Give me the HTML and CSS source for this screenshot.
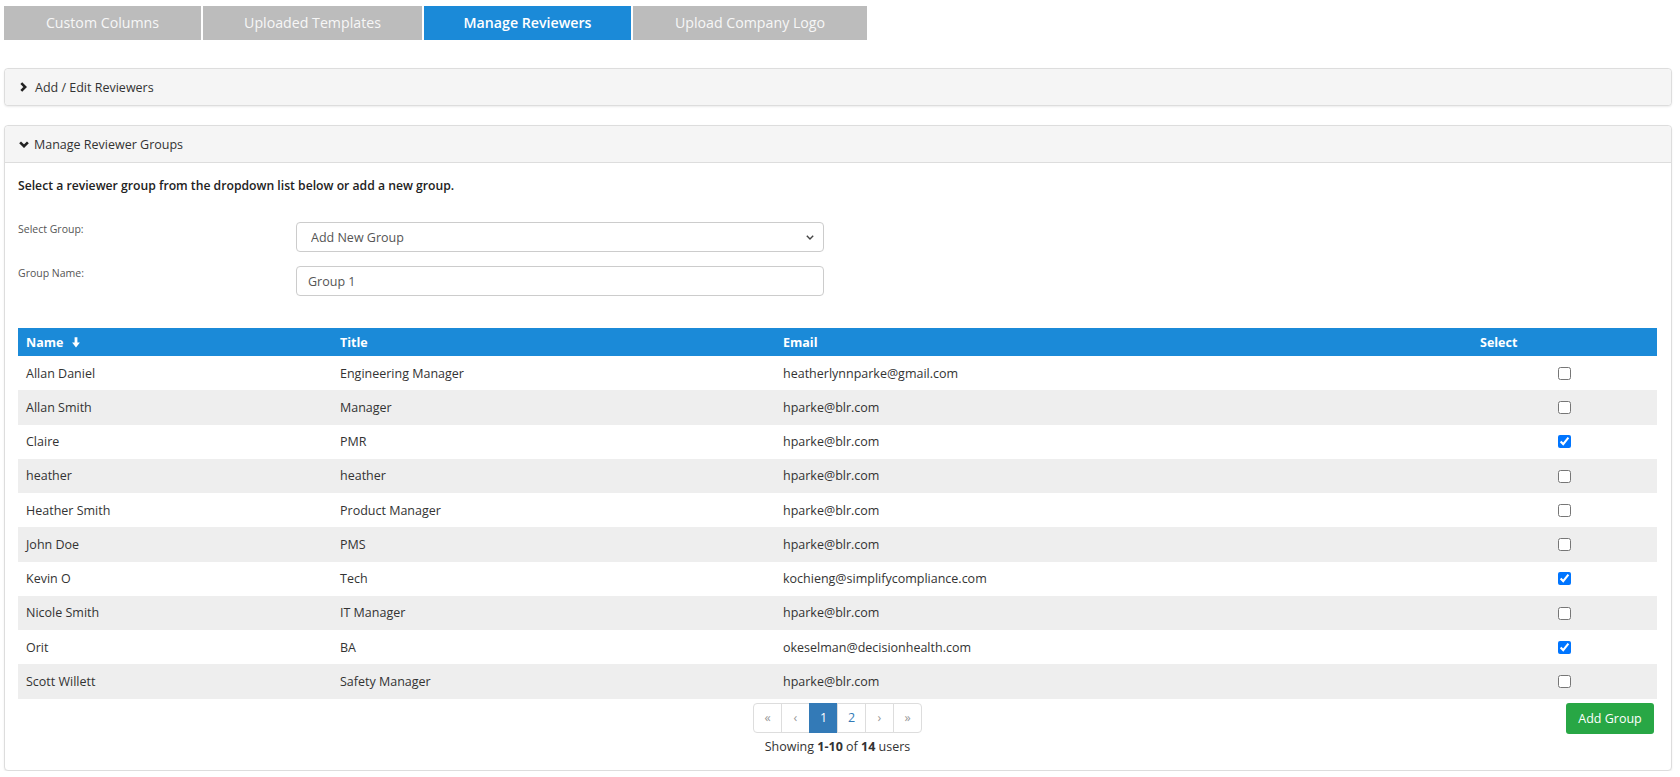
FILE: index.html
```html
<!DOCTYPE html>
<html lang="en">
<head>
<meta charset="utf-8">
<title>Manage Reviewers</title>
<link rel="stylesheet" href="styles.css">
</head>
<body>
<div class="tabs">
  <div class="tab t1">Custom Columns</div>
  <div class="tab t2">Uploaded Templates</div>
  <div class="tab t3 active">Manage Reviewers</div>
  <div class="tab t4">Upload Company Logo</div>
</div>

<div class="panel panel-first">
  <div class="panel-heading only">
    <svg class="chev" width="7" height="10" viewBox="0 0 7 10"><path d="M1.3 1.1 L5.2 5 L1.3 8.9" fill="none" stroke="#222" stroke-width="2.6"/></svg>
    <span>Add / Edit Reviewers</span>
  </div>
</div>

<div class="panel panel-second">
  <div class="panel-heading">
    <svg class="chev down" width="10" height="7" viewBox="0 0 10 7"><path d="M1.1 1.3 L5 5.2 L8.9 1.3" fill="none" stroke="#222" stroke-width="2.6"/></svg>
    <span>Manage Reviewer Groups</span>
  </div>
  <div class="panel-body">
    <p class="intro">Select a reviewer group from the dropdown list below or add a new group.</p>
    <div class="form-row">
      <label class="form-label">Select Group:</label>
      <div class="select-wrap">
        <select class="select"><option>Add New Group</option></select>
        <svg class="select-caret" width="8" height="5" viewBox="0 0 8 5"><path d="M0.8 0.8 L4 4 L7.2 0.8" fill="none" stroke="#444" stroke-width="1.4"/></svg>
      </div>
    </div>
    <div class="form-row">
      <label class="form-label">Group Name:</label>
      <input class="input" type="text" value="Group 1">
    </div>

    <table class="grid">
      <colgroup>
        <col class="c-name"><col class="c-title"><col class="c-email"><col class="c-select">
      </colgroup>
      <thead>
        <tr>
          <th>Name <svg class="sort" width="8" height="11" viewBox="0 0 8 11"><path d="M2.6 0.3h2.8v5.2h2.5L4 10.6 0.1 5.5h2.5z" fill="#fff"/></svg></th>
          <th>Title</th>
          <th>Email</th>
          <th>Select</th>
        </tr>
      </thead>
      <tbody>
        <tr><td>Allan Daniel</td><td>Engineering Manager</td><td>heatherlynnparke@gmail.com</td><td class="chk"><input type="checkbox"></td></tr>
        <tr><td>Allan Smith</td><td>Manager</td><td>hparke@blr.com</td><td class="chk"><input type="checkbox"></td></tr>
        <tr><td>Claire</td><td>PMR</td><td>hparke@blr.com</td><td class="chk"><input type="checkbox" checked></td></tr>
        <tr><td>heather</td><td>heather</td><td>hparke@blr.com</td><td class="chk"><input type="checkbox"></td></tr>
        <tr><td>Heather Smith</td><td>Product Manager</td><td>hparke@blr.com</td><td class="chk"><input type="checkbox"></td></tr>
        <tr><td>John Doe</td><td>PMS</td><td>hparke@blr.com</td><td class="chk"><input type="checkbox"></td></tr>
        <tr><td>Kevin O</td><td>Tech</td><td>kochieng@simplifycompliance.com</td><td class="chk"><input type="checkbox" checked></td></tr>
        <tr><td>Nicole Smith</td><td>IT Manager</td><td>hparke@blr.com</td><td class="chk"><input type="checkbox"></td></tr>
        <tr><td>Orit</td><td>BA</td><td>okeselman@decisionhealth.com</td><td class="chk"><input type="checkbox" checked></td></tr>
        <tr><td>Scott Willett</td><td>Safety Manager</td><td>hparke@blr.com</td><td class="chk"><input type="checkbox"></td></tr>
      </tbody>
    </table>

    <div class="footer">
      <div class="pager-block">
        <div class="pager">
          <span class="pg muted">«</span>
          <span class="pg muted">‹</span>
          <span class="pg current">1</span>
          <span class="pg">2</span>
          <span class="pg muted">›</span>
          <span class="pg muted">»</span>
        </div>
        <div class="showing">Showing <b>1-10</b> of <b>14</b> users</div>
      </div>
      <button class="btn-add">Add Group</button>
    </div>
  </div>
</div>
</body>
</html>
```

FILE: styles.css
```css
* { box-sizing: border-box; }

body {
  margin: 0;
  padding: 6px 8px 0 4px;
  background: #ffffff;
  font-family: "Open Sans", "Liberation Sans", sans-serif;
  font-size: 12.5px;
  color: #333333;
}

.tabs {
  display: flex;
  gap: 2px;
}

.tab {
  height: 34px;
  line-height: 34px;
  text-align: center;
  background: #bcbcbc;
  color: #f7f7f7;
  font-size: 14.2px;
  white-space: nowrap;
  overflow: hidden;
}

.t1 { width: 197px; }
.t2 { width: 219px; }
.t3 { width: 207px; }
.t4 { width: 234px; }

.tab.active {
  background: #1b8ad8;
  color: #ffffff;
  font-weight: 600;
}

.panel {
  border: 1px solid #dddddd;
  border-radius: 4px;
  background: #ffffff;
  box-shadow: 0 1px 2px rgba(0, 0, 0, 0.08);
}

.panel-first { margin-top: 28px; }
.panel-second { margin-top: 19px; }

.panel-heading {
  height: 37px;
  display: flex;
  align-items: center;
  padding: 0 15px;
  background: #f5f5f5;
  border-bottom: 1px solid #dddddd;
  border-radius: 4px 4px 0 0;
  color: #333333;
}

.panel-heading.only {
  height: 36px;
  border-bottom: none;
  border-radius: 4px;
}

.chev { flex: none; margin-right: 8px; }
.chev.down { margin-right: 5px; margin-left: -1px; }

.panel-body {
  padding: 14px 14px 14px 13px;
}

.intro {
  margin: 0;
  line-height: 18px;
  font-size: 12.2px;
  font-weight: 600;
  color: #222222;
}

.form-row {
  display: flex;
  align-items: flex-start;
  height: 30px;
  margin-top: 14px;
}

.intro + .form-row { margin-top: 27px; }

.form-label {
  width: 278px;
  flex: none;
  font-size: 10.5px;
  line-height: 15px;
  padding-top: 0;
  color: #555555;
}

.select-wrap {
  position: relative;
  width: 528px;
  height: 30px;
}

.select {
  appearance: none;
  -webkit-appearance: none;
  width: 100%;
  height: 30px;
  margin: 0;
  padding: 0 14px;
  border: 1px solid #cccccc;
  border-radius: 4px;
  background: #ffffff;
  font-family: "Open Sans", "Liberation Sans", sans-serif;
  font-size: 12.5px;
  color: #555555;
}

.select-caret {
  position: absolute;
  right: 10px;
  top: 13px;
}

.input {
  width: 528px;
  height: 30px;
  margin: 0;
  padding: 0 11px;
  border: 1px solid #cccccc;
  border-radius: 4px;
  font-family: "Open Sans", "Liberation Sans", sans-serif;
  font-size: 12.5px;
  color: #555555;
}

.grid {
  width: 100%;
  margin-top: 32px;
  border-collapse: collapse;
  table-layout: fixed;
}

.c-name { width: 314px; }
.c-title { width: 443px; }
.c-email { width: 697px; }
.c-select { width: 185px; }

.grid th {
  height: 28px;
  padding: 0 8px;
  background: #1b8ad8;
  color: #ffffff;
  font-weight: 700;
  text-align: left;
  white-space: nowrap;
}

.sort { margin-left: 5px; vertical-align: -1px; }

.grid td {
  height: 34.26px;
  padding: 0 8px;
  color: #333333;
  white-space: nowrap;
}

.grid tbody tr:nth-child(even) td { background: #eeeeee; }

.grid td.chk { text-align: center; padding: 0 0 2px 0; }
.grid td.chk input {
  width: 13px;
  height: 13px;
  margin: 0;
  vertical-align: middle;
}

.footer {
  display: grid;
  grid-template-columns: 1fr auto 1fr;
  align-items: start;
  margin-top: 4px;
}

.pager-block {
  grid-column: 2;
  display: flex;
  flex-direction: column;
  align-items: center;
}

.pager { display: flex; }

.pg {
  width: 29px;
  height: 30px;
  display: flex;
  align-items: center;
  justify-content: center;
  border: 1px solid #dddddd;
  margin-left: -1px;
  color: #337ab7;
  background: #ffffff;
}

.pg:first-child { margin-left: 0; border-radius: 4px 0 0 4px; }
.pg:last-child { border-radius: 0 4px 4px 0; }
.pg.muted { color: #999999; }
.pg.current { background: #337ab7; border-color: #337ab7; color: #ffffff; }

.showing {
  margin-top: 5px;
  line-height: 18px;
  color: #333333;
}

.btn-add {
  grid-column: 3;
  justify-self: end;
  width: 88px;
  height: 31px;
  margin: 0 3px 0 0;
  padding: 0;
  border: none;
  border-radius: 3px;
  background: #28a745;
  color: #ffffff;
  font-family: "Open Sans", "Liberation Sans", sans-serif;
  font-size: 12.5px;
}
```
